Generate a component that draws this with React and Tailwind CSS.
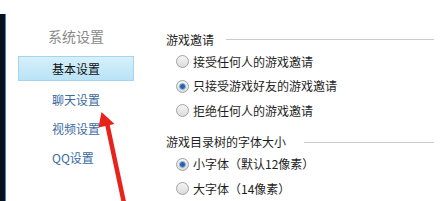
import React from "react";

const font = { fontFamily: '"Noto Sans CJK SC", "Noto Sans", sans-serif' };

function Radio({ checked, label }) {
  return (
    <div className="flex items-center h-[25px] pl-[10px]">
      <span className="w-[13px] h-[13px] rounded-full border border-[#a3a3a3] bg-gradient-to-b from-[#f4f4f4] to-[#dcdcdc] flex items-center justify-center shrink-0">
        {checked && (
          <span className="w-[7px] h-[7px] rounded-full bg-[#2a62a8] border border-[#8fb8e0]"></span>
        )}
      </span>
      <span className="ml-[4px] text-[12px] leading-none text-[#1e1e1e]">{label}</span>
    </div>
  );
}

function Heading({ text, gap }) {
  return (
    <div className="flex items-center h-[20px]">
      <span className="text-[12px] leading-none text-[#1e1e1e] whitespace-nowrap">{text}</span>
      <span className={`flex-1 h-px bg-[#cbcbcb] ${gap}`}></span>
    </div>
  );
}

export default function App() {
  return (
    <div className="relative w-[441px] h-[201px] overflow-hidden bg-white flex" style={font}>
      <div className="w-[6px] mt-[14px] bg-[#07111d] border-r border-[#3f8db3]"></div>

      <div className="w-[144px] pl-[12px] pt-[26px] flex flex-col">
        <div className="w-[116px] h-[20px] flex items-center justify-center text-[14px] text-[#8a8a8a]">系统设置</div>
        <div className="w-[116px] h-[25px] mt-[10px] flex items-center justify-center text-[12px] text-[#111] bg-gradient-to-b from-[#d6f0fb] to-[#b9e3f6] border border-[#a5d5ee]">
          基本设置
        </div>
        <div className="mt-[4px] flex flex-col">
          <div className="h-[29px] flex items-center pl-[34px] text-[12px] text-[#3b6c9f]">聊天设置</div>
          <div className="h-[29px] flex items-center pl-[34px] text-[12px] text-[#3b6c9f]">视频设置</div>
          <div className="h-[29px] flex items-center pl-[34px] text-[12px] text-[#3b6c9f]">QQ设置</div>
        </div>
      </div>

      <div className="ml-[16px] w-[268px] pt-[30px] flex flex-col">
        <Heading text="游戏邀请" gap="ml-[12px]" />
        <Radio label="接受任何人的游戏邀请" />
        <Radio checked label="只接受游戏好友的游戏邀请" />
        <Radio label="拒绝任何人的游戏邀请" />
        <div className="mt-[9px]">
          <Heading text="游戏目录树的字体大小" gap="ml-[18px]" />
        </div>
        <Radio checked label="小字体（默认12像素）" />
        <Radio label="大字体（14像素）" />
      </div>

      <svg className="absolute left-0 top-0 pointer-events-none" width="441" height="201" viewBox="0 0 441 201">
        <line x1="107" y1="123" x2="124" y2="203" stroke="#e8231b" strokeWidth="4.5" />
        <polygon points="101.5,112 98.5,127.5 114.5,124" fill="#e8231b" />
      </svg>
    </div>
  );
}
